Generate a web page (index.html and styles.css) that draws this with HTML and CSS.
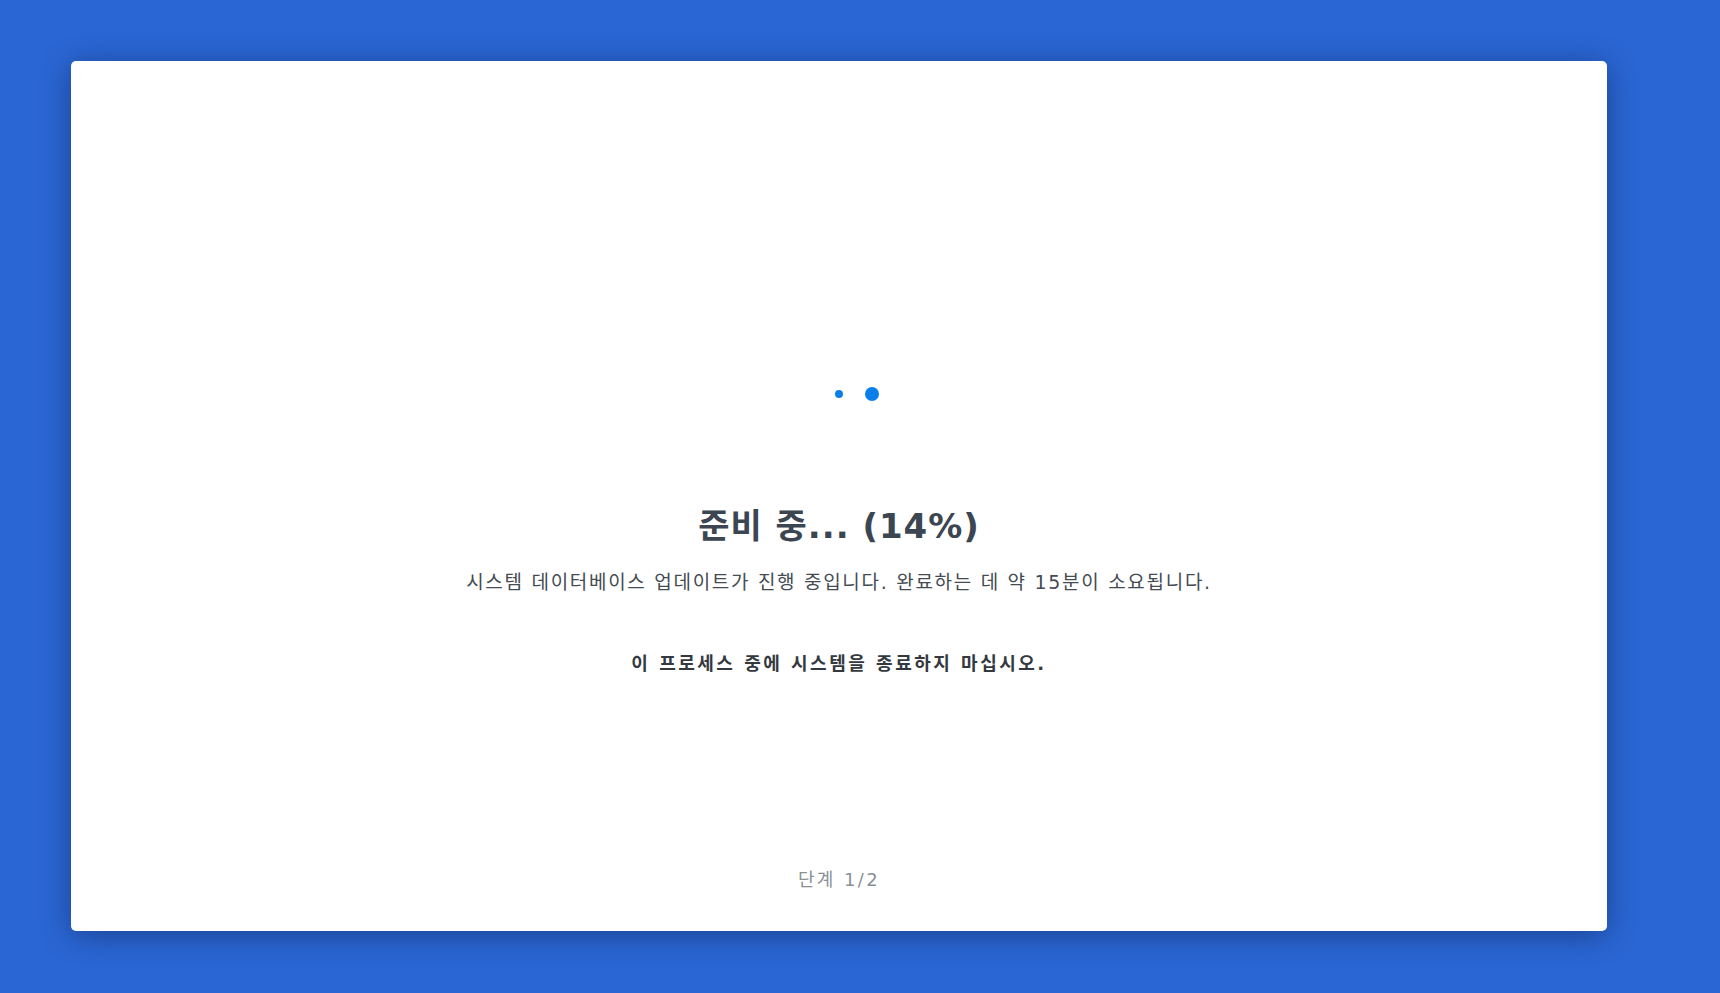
FILE: index.html
```html
<!DOCTYPE html>
<html lang="ko">
<head>
    <meta charset="UTF-8">
    <meta name="viewport" content="width=device-width, initial-scale=1.0">
    <title>업데이트</title>
    <link rel="stylesheet" href="styles.css">
</head>
<body>
    <div class="card">
        <div class="main">
            <div class="loader">
                <span class="dot dot-hidden"></span>
                <span class="dot dot-small"></span>
                <span class="dot"></span>
            </div>
            <h1 class="title">준비 중... (14%)</h1>
            <p class="desc">시스템 데이터베이스 업데이트가 진행 중입니다. 완료하는 데 약 15분이 소요됩니다.</p>
            <p class="warn">이 프로세스 중에 시스템을 종료하지 마십시오.</p>
        </div>
        <div class="step">단계 1/2</div>
    </div>
</body>
</html>
```

FILE: styles.css
```css
html, body {
    height: 100%;
}

body {
    margin: 0;
    background: #2a67d4;
    font-family: "DejaVu Sans", "Noto Sans CJK KR", sans-serif;
    padding: 61px 0 0 71px;
    box-sizing: border-box;
}

.card {
    width: 1536px;
    height: 870px;
    background: #fff;
    border-radius: 5px;
    box-shadow: 0 4px 30px rgba(10, 20, 60, 0.45);
    display: flex;
    flex-direction: column;
    align-items: center;
    box-sizing: border-box;
    padding: 326px 0 39px;
}

.main {
    display: flex;
    flex-direction: column;
    align-items: center;
    flex: 1;
}

.loader {
    display: flex;
    gap: 19px;
    height: 14px;
}

.dot {
    width: 14px;
    height: 14px;
    border-radius: 50%;
    background: #0a7fea;
}

.dot-hidden {
    transform: scale(0);
}

.dot-small {
    transform: scale(0.57);
}

.title {
    margin: 103px 0 0;
    font-size: 34px;
    line-height: 44px;
    font-weight: 700;
    color: #3b4652;
    letter-spacing: 1px;
}

.desc {
    margin: 20px 0 0;
    font-size: 19px;
    line-height: 28px;
    color: #444b52;
    letter-spacing: 1.7px;
}

.warn {
    margin: 55px 0 0;
    font-size: 18px;
    line-height: 26px;
    font-weight: 700;
    color: #33393f;
    letter-spacing: 2.5px;
}

.step {
    font-size: 18px;
    line-height: 24px;
    color: #8a9096;
    letter-spacing: 2.4px;
}
```
